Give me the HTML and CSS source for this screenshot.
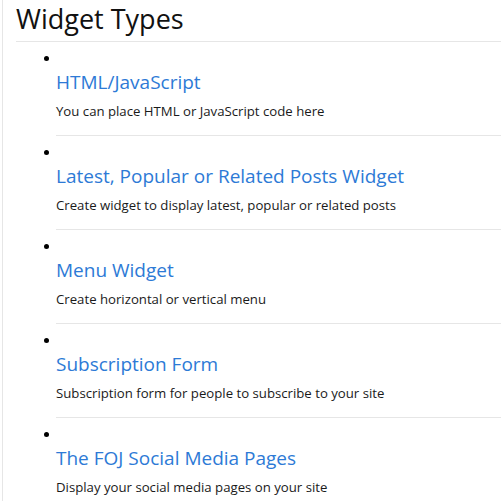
FILE: index.html
```html
<!DOCTYPE html>
<html>
<head>
<meta charset="utf-8">
<link rel="stylesheet" href="styles.css">
</head>
<body>
<div class="page">
  <h2 class="heading">Widget Types</h2>
  <ul class="widgets">
    <li class="widget">
      <a class="widget-link" href="#">HTML/JavaScript</a>
      <p class="widget-desc">You can place HTML or JavaScript code here</p>
    </li>
    <li class="widget">
      <a class="widget-link" href="#">Latest, Popular or Related Posts Widget</a>
      <p class="widget-desc">Create widget to display latest, popular or related posts</p>
    </li>
    <li class="widget">
      <a class="widget-link" href="#">Menu Widget</a>
      <p class="widget-desc">Create horizontal or vertical menu</p>
    </li>
    <li class="widget">
      <a class="widget-link" href="#">Subscription Form</a>
      <p class="widget-desc">Subscription form for people to subscribe to your site</p>
    </li>
    <li class="widget">
      <a class="widget-link" href="#">The FOJ Social Media Pages</a>
      <p class="widget-desc">Display your social media pages on your site</p>
    </li>
  </ul>
</div>
</body>
</html>
```
FILE: styles.css
```css
html, body {
  margin: 0;
  padding: 0;
  background: #fff;
}
body {
  font-family: "Open Sans", "Noto Sans", sans-serif;
  color: #1a1a1a;
  overflow: hidden;
}
.page {
  margin-left: 2px;
  border-left: 1px solid #e6e6e6;
  padding-left: 13px;
  min-height: 501px;
  box-sizing: border-box;
}
.heading {
  margin: 0;
  font-size: 27px;
  font-weight: 400;
  line-height: 36px;
  padding-top: 1px;
  height: 42px;
  box-sizing: border-box;
  border-bottom: 1px solid #e6e6e6;
  color: #111;
}
.widgets {
  list-style: none;
  margin: 0;
  padding: 0 0 0 40px;
}
.widget {
  padding: 14px 0 15px;
  border-bottom: 1px solid #e6e6e6;
}
.widget::before {
  content: "";
  display: block;
  width: 5px;
  height: 5px;
  border-radius: 50%;
  background: #000;
  margin-left: -12px;
}
.widget-link {
  display: block;
  margin-top: 9px;
  font-size: 19px;
  line-height: 24px;
  color: #2d7ad6;
  text-decoration: none;
}
.widget-desc {
  margin: 8px 0 0;
  font-size: 13.2px;
  line-height: 18px;
  color: #1a1a1a;
}
```
